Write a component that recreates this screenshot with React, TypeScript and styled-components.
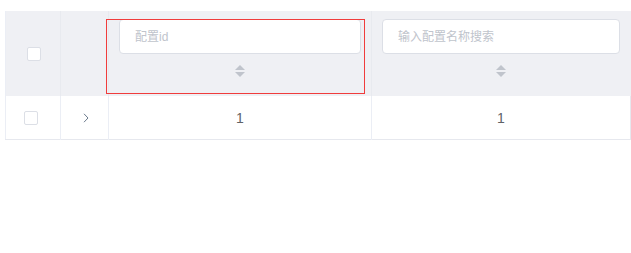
import React from "react";
import styled, { createGlobalStyle } from "styled-components";

const GlobalStyle = createGlobalStyle`
  html, body { margin: 0; padding: 0; background: #ffffff; }
  body { font-family: "Liberation Sans", "Noto Sans CJK SC", sans-serif; }
`;

const Page = styled.div`
  padding: 11px 1px 0 5px;
`;

const Table = styled.table`
  width: 625px;
  table-layout: fixed;
  border-collapse: collapse;
  border-spacing: 0;
  font-size: 14px;
  color: #606266;
  border-bottom: 1px solid #e6e8ee;
  border-left: 1px solid #ebeef5;
`;

const HeadCell = styled.th`
  position: relative;
  background: #eff0f4;
  height: 85px;
  padding: 0;
  vertical-align: top;
  border-right: 1px solid #e8eaef;
  font-weight: normal;
  &:first-child, &:nth-child(2) { vertical-align: middle; }
  &:last-child { border-right: 1px solid #eff0f4; }
`;

const BodyCell = styled.td`
  height: 43px;
  padding: 0;
  text-align: center;
  vertical-align: middle;
  border-right: 1px solid #ebeef5;
  &:last-child { border-right: 1px solid #e6e8ee; }
`;

const FilterBox = styled.div`
  display: flex;
  flex-direction: column;
  align-items: stretch;
  padding: 8px 10px 0 10px;
`;

const SearchInput = styled.input`
  box-sizing: border-box;
  height: 35px;
  width: 100%;
  border: 1px solid #dcdfe6;
  border-radius: 4px;
  background: #ffffff;
  padding: 0 15px;
  font-family: "Liberation Sans", "Noto Sans CJK SC", sans-serif;
  font-size: 12px;
  color: #606266;
  outline: none;
  &::placeholder { color: #c0c4cc; }
`;

const CaretWrap = styled.span`
  display: flex;
  flex-direction: column;
  align-items: center;
  gap: 2px;
  margin-top: 11px;
`;

const Caret = styled.i<{ $dir: "up" | "down" }>`
  width: 0;
  height: 0;
  border-left: 5px solid transparent;
  border-right: 5px solid transparent;
  ${(p) =>
    p.$dir === "up"
      ? "border-bottom: 5px solid #c0c4cc;"
      : "border-top: 5px solid #c0c4cc;"}
`;

const Highlight = styled.div`
  position: absolute;
  left: -3px;
  top: 8px;
  width: 259px;
  height: 75px;
  box-sizing: border-box;
  border: 1px solid #f03c3c;
  pointer-events: none;
`;

const Check = styled.span`
  display: inline-block;
  box-sizing: border-box;
  width: 14px;
  height: 14px;
  border: 1px solid #dcdfe6;
  border-radius: 2px;
  background: #fff;
`;

const CheckCell = styled.div<{ $pad: number }>`
  display: flex;
  justify-content: flex-start;
  align-items: center;
  padding-left: ${(p) => p.$pad}px;
`;

const Expand = styled.span`
  display: inline-flex;
  align-items: center;
  justify-content: center;
  width: 12px;
  height: 12px;
  margin-left: 2px;
  margin-top: 2px;
`;

const Value = styled.span`
  display: inline-block;
  line-height: 20px;
`;

export default function App() {
  return (
    <>
      <GlobalStyle />
      <Page>
        <Table>
          <colgroup>
            <col style={{ width: 55 }} />
            <col style={{ width: 48 }} />
            <col style={{ width: 263 }} />
            <col style={{ width: 259 }} />
          </colgroup>
          <thead>
            <tr>
              <HeadCell>
                <CheckCell $pad={21}>
                  <Check />
                </CheckCell>
              </HeadCell>
              <HeadCell />
              <HeadCell>
                <Highlight />
                <FilterBox>
                  <SearchInput placeholder="配置id" />
                  <CaretWrap>
                    <Caret $dir="up" />
                    <Caret $dir="down" />
                  </CaretWrap>
                </FilterBox>
              </HeadCell>
              <HeadCell>
                <FilterBox>
                  <SearchInput placeholder="输入配置名称搜索" />
                  <CaretWrap>
                    <Caret $dir="up" />
                    <Caret $dir="down" />
                  </CaretWrap>
                </FilterBox>
              </HeadCell>
            </tr>
          </thead>
          <tbody>
            <tr>
              <BodyCell>
                <CheckCell $pad={18}>
                  <Check />
                </CheckCell>
              </BodyCell>
              <BodyCell>
                <Expand>
                  <svg width="6" height="10" viewBox="0 0 6 10">
                    <path
                      d="M1 0.8 L5 5 L1 9.2"
                      fill="none"
                      stroke="#6b7a8c"
                      strokeWidth="1"
                    />
                  </svg>
                </Expand>
              </BodyCell>
              <BodyCell>
                <Value>1</Value>
              </BodyCell>
              <BodyCell>
                <Value>1</Value>
              </BodyCell>
            </tr>
          </tbody>
        </Table>
      </Page>
    </>
  );
}
